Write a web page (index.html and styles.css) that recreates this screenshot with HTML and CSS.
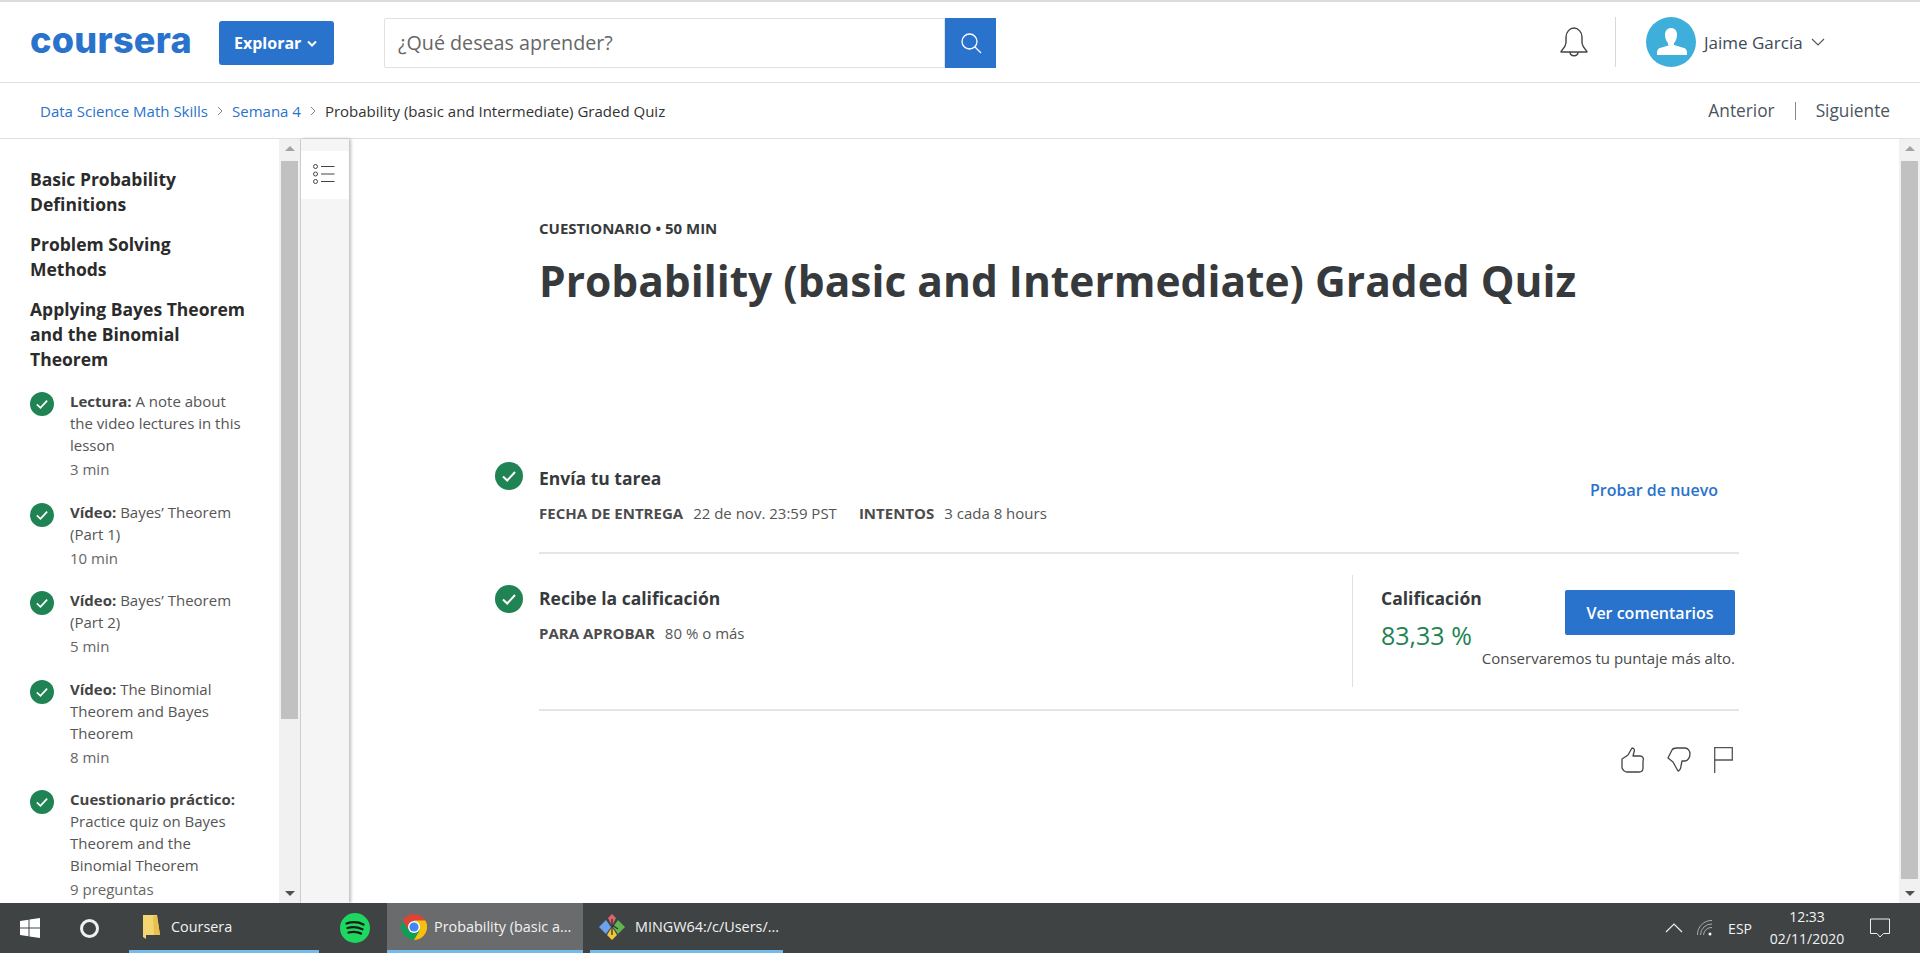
FILE: index.html
```html
<!DOCTYPE html>
<html>

<head>
    <title>Probability (basic and Intermediate) Graded Quiz | Coursera</title>
    <link rel="stylesheet" href="styles.css">
</head>

<body>
    <header class="top-bar">
        <span class="logo">coursera</span>
        <button class="explore-button">Explorar
            <svg width="10" height="7" viewBox="0 0 10 7"><path d="M1 1.5l4 4 4-4" fill="none" stroke="#fff" stroke-width="2"/></svg>
        </button>
        <div class="search">
            <div class="search-input">¿Qué deseas aprender?</div>
            <div class="search-button">
                <svg width="22" height="22" viewBox="0 0 22 22"><circle cx="9.5" cy="9.5" r="7.5" fill="none" stroke="#fff" stroke-width="1.3"/><path d="M15 15l6 6" stroke="#fff" stroke-width="1.3"/></svg>
            </div>
        </div>
        <svg class="bell" width="30" height="30" viewBox="0 0 30 30"><path d="M2 25c0-2 4-3 5-9V10c0-5 4-9 8-9s8 4 8 9v6c1 6 5 7 5 9z" fill="none" stroke="#444" stroke-width="1.4" stroke-linejoin="round"/><path d="M11 25c0 5 8 5 8 0" fill="none" stroke="#444" stroke-width="1.4"/></svg>
        <div class="user">
            <svg class="avatar" width="50" height="50" viewBox="0 0 50 50"><circle cx="25" cy="25" r="25" fill="#3eaedb"/><path d="M25 11c4 0 6 3 6 7 0 4-2 7-3 8v2l10 3c1 0 3 2 3 4v3H11v-3c0-2 2-4 3-4l10-3h-2v-2c-1-1-3-4-3-8s2-7 6-7z" fill="#fff"/></svg>
            <span class="user-name">Jaime García</span>
            <svg width="14" height="8" viewBox="0 0 14 8"><path d="M1 1l6 6 6-6" fill="none" stroke="#555" stroke-width="1.1"/></svg>
        </div>
    </header>

    <nav class="breadcrumb-bar">
        <div class="breadcrumbs">
            <a>Data Science Math Skills</a>
            <svg width="6" height="10" viewBox="0 0 6 10"><path d="M1 1l4 4-4 4" fill="none" stroke="#888"/></svg>
            <a>Semana 4</a>
            <svg width="6" height="10" viewBox="0 0 6 10"><path d="M1 1l4 4-4 4" fill="none" stroke="#888"/></svg>
            <span>Probability (basic and Intermediate) Graded Quiz</span>
        </div>
        <div class="pager">
            <span>Anterior</span>
            <i class="pager-line"></i>
            <span>Siguiente</span>
        </div>
    </nav>

    <div class="workspace">
        <aside class="sidebar">
            <h3>Basic Probability Definitions</h3>
            <h3>Problem Solving Methods</h3>
            <h3>Applying Bayes Theorem and the Binomial Theorem</h3>

            <div class="lesson">
                <svg class="check small" viewBox="0 0 28 28"><circle cx="14" cy="14" r="14" fill="#1f8354"/><path d="M8 14.5l4.2 4L20 10" fill="none" stroke="#fff" stroke-width="2"/></svg>
                <div class="lesson-text">
                    <p><b>Lectura:</b> A note about the video lectures in this lesson</p>
                    <small>3 min</small>
                </div>
            </div>
            <div class="lesson">
                <svg class="check small" viewBox="0 0 28 28"><circle cx="14" cy="14" r="14" fill="#1f8354"/><path d="M8 14.5l4.2 4L20 10" fill="none" stroke="#fff" stroke-width="2"/></svg>
                <div class="lesson-text">
                    <p><b>Vídeo:</b> Bayes’ Theorem (Part 1)</p>
                    <small>10 min</small>
                </div>
            </div>
            <div class="lesson">
                <svg class="check small" viewBox="0 0 28 28"><circle cx="14" cy="14" r="14" fill="#1f8354"/><path d="M8 14.5l4.2 4L20 10" fill="none" stroke="#fff" stroke-width="2"/></svg>
                <div class="lesson-text">
                    <p><b>Vídeo:</b> Bayes’ Theorem (Part 2)</p>
                    <small>5 min</small>
                </div>
            </div>
            <div class="lesson">
                <svg class="check small" viewBox="0 0 28 28"><circle cx="14" cy="14" r="14" fill="#1f8354"/><path d="M8 14.5l4.2 4L20 10" fill="none" stroke="#fff" stroke-width="2"/></svg>
                <div class="lesson-text">
                    <p><b>Vídeo:</b> The Binomial Theorem and Bayes Theorem</p>
                    <small>8 min</small>
                </div>
            </div>
            <div class="lesson">
                <svg class="check small" viewBox="0 0 28 28"><circle cx="14" cy="14" r="14" fill="#1f8354"/><path d="M8 14.5l4.2 4L20 10" fill="none" stroke="#fff" stroke-width="2"/></svg>
                <div class="lesson-text">
                    <p><b>Cuestionario práctico:</b> Practice quiz on Bayes Theorem and the Binomial Theorem</p>
                    <small>9 preguntas</small>
                </div>
            </div>
        </aside>

        <div class="scrollbar sidebar-scroll">
            <i class="arrow-up"></i>
            <div class="scroll-area"><div class="thumb"></div></div>
            <i class="arrow-down"></i>
        </div>

        <div class="rail">
            <div class="rail-tab">
                <svg width="22" height="20" viewBox="0 0 22 20"><g fill="none" stroke="#444"><circle cx="2.5" cy="2.5" r="2"/><circle cx="2.5" cy="10" r="2"/><circle cx="2.5" cy="17.5" r="2"/><path d="M8 2.5h13.5M8 10h13.5M8 17.5h13.5"/></g></svg>
            </div>
        </div>

        <main class="main">
            <div class="quiz">
                <div class="quiz-head">
                    <div class="eyebrow">CUESTIONARIO • 50 MIN</div>
                    <h1>Probability (basic and Intermediate) Graded Quiz</h1>
                </div>

                <section class="step">
                    <svg class="check" viewBox="0 0 28 28"><circle cx="14" cy="14" r="14" fill="#1f8354"/><path d="M8 14.5l4.2 4L20 10" fill="none" stroke="#fff" stroke-width="2"/></svg>
                    <div class="step-body first">
                        <div>
                            <h2>Envía tu tarea</h2>
                            <div class="meta"><b>FECHA DE ENTREGA</b><span>22 de nov. 23:59 PST</span><b class="meta-next">INTENTOS</b><span>3 cada 8 hours</span></div>
                        </div>
                        <a class="retry">Probar de nuevo</a>
                    </div>
                </section>

                <section class="step">
                    <svg class="check lower" viewBox="0 0 28 28"><circle cx="14" cy="14" r="14" fill="#1f8354"/><path d="M8 14.5l4.2 4L20 10" fill="none" stroke="#fff" stroke-width="2"/></svg>
                    <div class="step-body second">
                        <div class="step-info">
                            <h2>Recibe la calificación</h2>
                            <div class="meta"><b>PARA APROBAR</b><span>80 % o más</span></div>
                        </div>
                        <div class="grade">
                            <div class="grade-top">
                                <div>
                                    <h2>Calificación</h2>
                                    <div class="grade-value">83,33 %</div>
                                </div>
                                <button class="feedback-button">Ver comentarios</button>
                            </div>
                            <div class="grade-note">Conservaremos tu puntaje más alto.</div>
                        </div>
                    </div>
                </section>

                <div class="reactions">
                    <svg width="24" height="26" viewBox="0 0 24 26"><path d="M2 12l6-4 4-7c2 0 3 2 2 4l-1 4h7c3 0 4 3 3 5v7c0 3-2 4-4 4H7c-3 0-4-2-5-4z" fill="none" stroke="#444" stroke-width="1.3" stroke-linejoin="round"/></svg>
                    <svg width="24" height="26" viewBox="0 0 24 26"><path d="M1 11l4-8c1-2 3-2 5-2h8c3 0 5 3 5 6s-2 7-5 7h-3l-1 5c0 3-2 5-3 5l-5-9z" fill="none" stroke="#444" stroke-width="1.3" stroke-linejoin="round"/></svg>
                    <svg width="19" height="26" viewBox="0 0 19 26"><path d="M.7 26V.7h17.6V13H.7" fill="none" stroke="#555" stroke-width="1.3"/></svg>
                </div>
            </div>
        </main>

        <div class="scrollbar main-scroll">
            <i class="arrow-up"></i>
            <div class="scroll-area"><div class="thumb"></div></div>
            <i class="arrow-down"></i>
        </div>
    </div>

    <footer class="taskbar">
        <svg class="start" width="20" height="20" viewBox="0 0 20 20"><path d="M0 3l8.5-1.3v7.8H0zM9.5 1.5L20 0v9.5H9.5zM0 10.500h8.500v7.800L0 17zM9.500 10.500H20V20L9.500 18.500z" fill="#fff"/></svg>
        <span class="cortana"></span>
        <div class="task task-folder">
            <svg width="18" height="26" viewBox="0 0 18 26"><path d="M1 1h14l3 20H4v4l-3-2z" fill="#f5d571"/><path d="M11 2h4l3 19h-6z" fill="#e9bf4e"/></svg>
            <span>Coursera</span>
        </div>
        <svg class="spotify" width="30" height="30" viewBox="0 0 30 30"><circle cx="15" cy="15" r="15" fill="#1ed760"/><path d="M6.5 10.5c6-2 12-1.5 17 1M7.5 15c5-1.5 10-1 15 1.2M8.5 19.5c4-1 9-.8 12.500 1" fill="none" stroke="#1a1a1a" stroke-width="2.3" stroke-linecap="round"/></svg>
        <div class="task task-active">
            <svg width="26" height="26" viewBox="0 0 26 26"><circle cx="13" cy="13" r="13" fill="#db4437"/><path d="M13 26a13 13 0 0 0 11.3-19.5H13z" fill="#f4c20d"/><path d="M1.7 6.500A13 13 0 0 0 13 26l5.600-9.500H8z" fill="#0f9d58"/><circle cx="13" cy="13" r="6" fill="#fff"/><circle cx="13" cy="13" r="4.6" fill="#4285f4"/></svg>
            <span>Probability (basic a...</span>
        </div>
        <div class="task task-git">
            <svg width="28" height="28" viewBox="0 0 28 28"><path d="M14 1l4 4-4 8-4-8z" fill="#e0636a"/><path d="M1 14l7-7 5 7-5 7z" fill="#6aa2ee"/><path d="M27 14l-7-7-5 7 5 7z" fill="#62b550"/><path d="M14 27l-5-5 5-8 5 8z" fill="#f0c63c"/><path d="M14 6v16M14 12l6 4" stroke="#333" stroke-width="1.3"/></svg>
            <span>MINGW64:/c/Users/...</span>
        </div>
        <div class="tray">
            <svg width="18" height="10" viewBox="0 0 18 10"><path d="M1 9l8-8 8 8" fill="none" stroke="#eee" stroke-width="1.2"/></svg>
            <svg width="16" height="16" viewBox="0 0 16 16"><g fill="none" stroke="#aaa"><path d="M.5 15A14 14 0 0 1 15 .5M3.5 15A11 11 0 0 1 15 4M6.5 15A8 8 0 0 1 15 7.5"/></g><circle cx="13" cy="14" r="1.5" fill="#fff"/></svg>
            <span class="tray-lang">ESP</span>
            <div class="clock">12:33<br>02/11/2020</div>
            <svg width="20" height="20" viewBox="0 0 20 20"><path d="M.5 1h19v14.5h-6L10 19l-3-3.500H.5z" fill="none" stroke="#eee"/></svg>
        </div>
    </footer>
</body>

</html>
```

FILE: styles.css
```css
* {
    box-sizing: border-box;
}

html,
body {
    height: 100%;
}

body {
    margin: 0;
    display: flex;
    flex-direction: column;
    overflow: hidden;
    font-family: "Open Sans", sans-serif;
    color: #333;
    background-color: #fff;
}

h1,
h2,
h3,
p {
    margin: 0;
}

/* header */
.top-bar {
    height: 83px;
    flex: none;
    display: flex;
    align-items: center;
    padding-left: 30px;
    border-top: 2px solid #dcdce0;
    border-bottom: 1px solid #e0e0e0;
}

.logo {
    width: 160px;
    margin-top: -4px;
    font-family: Inter, sans-serif;
    font-size: 36px;
    font-weight: 800;
    letter-spacing: 0.3px;
    line-height: 1;
    color: #2a73cc;
}

.explore-button {
    width: 115px;
    height: 44px;
    margin-left: 29px;
    margin-top: 2px;
    display: flex;
    align-items: center;
    gap: 6px;
    padding: 0 0 0 15px;
    border: none;
    border-radius: 3px;
    background-color: #2a73cc;
    color: #fff;
    font-family: "Open Sans", sans-serif;
    font-size: 16px;
    font-weight: 700;
}

.search {
    width: 612px;
    height: 50px;
    margin-left: 50px;
    margin-top: 2px;
    display: flex;
}

.search-input {
    flex: 1;
    display: flex;
    align-items: center;
    padding: 0 0 2px 13px;
    border: 1px solid #e1e1e1;
    border-radius: 2px 0 0 2px;
    font-size: 19.7px;
    color: #666;
}

.search-button {
    width: 51px;
    display: flex;
    align-items: center;
    justify-content: center;
    background-color: #2a73cc;
}

.bell {
    margin-left: 563px;
}

.user {
    height: 50px;
    margin-left: 26px;
    padding-left: 30px;
    display: flex;
    align-items: center;
    border-left: 1px solid #d8d8d8;
}

.user-name {
    margin: 0 8px 0 8px;
    font-size: 17px;
    color: #3c4a5a;
}

/* breadcrumb */
.breadcrumb-bar {
    height: 56px;
    flex: none;
    display: flex;
    align-items: center;
    justify-content: space-between;
    padding: 0 30px 0 40px;
    border-bottom: 1px solid #e0e0e0;
}

.breadcrumbs {
    display: flex;
    align-items: center;
    gap: 9px;
    font-size: 15px;
}

.breadcrumbs a {
    color: #2a73cc;
}

.pager {
    display: flex;
    align-items: center;
    gap: 20px;
    font-size: 17.3px;
    color: #4a5560;
}

.pager-line {
    width: 1px;
    height: 18px;
    background-color: #888;
}

/* middle */
.workspace {
    flex: 1;
    min-height: 0;
    display: flex;
}

.sidebar {
    width: 279px;
    flex: none;
    overflow: hidden;
    padding: 28px 24px 0 30px;
}

.sidebar h3 {
    width: 218px;
    margin-bottom: 15px;
    font-size: 17.5px;
    font-weight: 700;
    line-height: 25px;
    color: #2b2b2b;
}

.sidebar h3:nth-of-type(3) {
    margin-bottom: 18px;
}

.lesson {
    display: flex;
    gap: 16px;
    margin-bottom: 20.5px;
    font-size: 15px;
    line-height: 22px;
    color: #555;
}

.lesson-text {
    width: 174px;
}

.lesson b {
    color: #444;
}

.lesson small {
    display: block;
    margin-top: 2px;
    font-size: 15px;
    color: #666;
}

.check {
    width: 28px;
    height: 28px;
    flex: none;
}

.check.small {
    width: 24px;
    height: 24px;
    margin-top: 2px;
}

.check.lower {
    margin-top: 31px;
}

.scrollbar {
    width: 21px;
    flex: none;
    display: flex;
    flex-direction: column;
    align-items: center;
    background-color: #f1f1f1;
}

.scroll-area {
    flex: 1;
    width: 100%;
    padding: 3px 2px;
}

.arrow-up,
.arrow-down {
    width: 0;
    height: 0;
    margin: 7px 0;
    border-left: 5px solid transparent;
    border-right: 5px solid transparent;
}

.arrow-up {
    border-bottom: 5px solid #a3a3a3;
}

.arrow-down {
    border-top: 5px solid #505050;
}

.thumb {
    background-color: #c1c1c1;
}

.sidebar-scroll .thumb {
    height: 558px;
}

.main-scroll .thumb {
    height: 718px;
}

.sidebar-scroll {
    border-right: 1px solid #cfcfcf;
    width: 22px;
}

.rail {
    width: 48px;
    flex: none;
    background-color: #f5f5f5;
    box-shadow: 2px 0 3px rgba(0, 0, 0, 0.25);
    padding-top: 12px;
}

.rail-tab {
    height: 48px;
    padding: 0 2px 3px 0;
    display: flex;
    align-items: center;
    justify-content: center;
    background-color: #fff;
}

.main {
    flex: 1;
    min-width: 0;
    padding-left: 146px;
}

.quiz {
    width: 1244px;
}

.quiz-head {
    height: 323px;
    padding: 80px 0 0 44px;
}

.eyebrow {
    font-size: 15px;
    font-weight: 700;
    line-height: 18px;
    color: #373a3c;
}

h1 {
    margin-top: 18px;
    font-size: 42.5px;
    font-weight: 700;
    line-height: 52px;
    color: #373a3c;
}

.step {
    display: flex;
    gap: 16px;
}

.step-body {
    flex: 1;
    display: flex;
    border-bottom: 2px solid #e5e5e5;
}

.step-body.first {
    height: 92px;
    justify-content: space-between;
}

.step-body.second {
    height: 157px;
    padding-top: 21px;
    justify-content: space-between;
}

.step-info {
    margin-top: 11px;
}

h2 {
    font-size: 17.5px;
    font-weight: 700;
    line-height: 24px;
    color: #373a3c;
}

.first h2 {
    margin-top: 4px;
}

.meta {
    margin-top: 11px;
    font-size: 15px;
    line-height: 24px;
    color: #555;
}

.meta b {
    margin-right: 10px;
    color: #4c4c4c;
}

.meta-next {
    margin-left: 22px;
}

.retry {
    margin: 16px 21px 0 0;
    font-size: 16px;
    font-weight: 600;
    line-height: 24px;
    color: #2a73cc;
}

.grade {
    width: 387px;
    height: 112px;
    padding: 11px 4px 0 28px;
    border-left: 1px solid #e0e0e0;
}

.grade-top {
    display: flex;
    justify-content: space-between;
}

.grade-value {
    margin-top: 9px;
    font-size: 25px;
    line-height: 32px;
    color: #1f8354;
}

.feedback-button {
    width: 170px;
    height: 45px;
    margin-top: 4px;
    border: none;
    border-radius: 2px;
    background-color: #2a73cc;
    color: #fff;
    font-family: "Open Sans", sans-serif;
    font-size: 16px;
    font-weight: 600;
}

.grade-note {
    margin-top: -3px;
    text-align: right;
    font-size: 15px;
    line-height: 20px;
    color: #4a4a4a;
}

.reactions {
    display: flex;
    justify-content: flex-end;
    align-items: center;
    gap: 23px;
    padding: 36px 6px 0 0;
}

/* windows taskbar */
.taskbar {
    height: 50px;
    flex: none;
    display: flex;
    align-items: center;
    background-color: #3f4344;
    color: #f2f2f2;
    font-family: "Open Sans", sans-serif;
    font-size: 14.4px;
}

.start {
    margin-left: 20px;
}

.cortana {
    width: 19px;
    height: 19px;
    margin-left: 40px;
    border: 3px solid #f0f0f0;
    border-radius: 50%;
}

.task {
    height: 50px;
    display: flex;
    align-items: center;
    gap: 9px;
    border-bottom: 3px solid #76b9ed;
}

.task-folder {
    width: 190px;
    margin-left: 30px;
    padding-left: 13px;
    gap: 11px;
}

.spotify {
    margin-left: 21px;
}

.task-active {
    width: 196px;
    margin-left: 17px;
    padding-left: 14px;
    gap: 7px;
    background-color: #696b6c;
}

.task-git {
    width: 193px;
    margin-left: 7px;
    padding-left: 8px;
    gap: 9px;
}

.tray {
    flex: 1;
    display: flex;
    align-items: center;
    justify-content: flex-end;
    padding-right: 30px;
}

.tray-lang {
    margin-left: 15px;
    font-size: 14px;
}

.clock {
    width: 90px;
    margin: 0 18px 0 10px;
    text-align: center;
    font-size: 14px;
    line-height: 22px;
}

.tray > svg:nth-child(2) {
    margin-left: 14px;
}
```
